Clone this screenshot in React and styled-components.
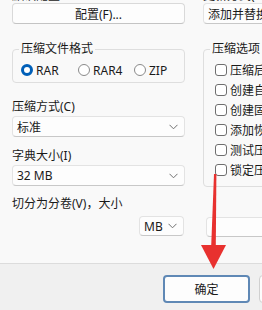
import React from 'react';
import styled, { createGlobalStyle } from 'styled-components';

const GlobalStyle = createGlobalStyle`
  html, body {
    margin: 0;
    padding: 0;
    background: #f0f0f0;
  }
  body {
    font-family: "Noto Sans", "Noto Sans CJK SC", sans-serif;
    font-size: 12px;
    color: #1a1a1a;
  }
`;

const Page = styled.div`
  position: relative;
  width: 262px;
  height: 310px;
  overflow: hidden;
`;

const Body = styled.div`
  height: 263px;
  background: #f9f9f9;
  display: flex;
  gap: 18px;
  padding-left: 12px;
  overflow: hidden;
`;

const Column = styled.div`
  display: flex;
  flex-direction: column;
  flex: 0 0 ${p => p.width}px;
  min-width: 0;
`;

const CutLabel = styled.div`
  height: 14px;
  line-height: 14px;
  margin-top: -11px;
  white-space: nowrap;
`;

const PushButton = styled.div`
  height: 21px;
  box-sizing: border-box;
  border: 1px solid #d9d9d9;
  border-bottom-color: #c4c4c4;
  border-radius: 4px;
  background: #fdfdfd;
  display: flex;
  align-items: center;
  justify-content: center;
  white-space: nowrap;
`;

const Group = styled.fieldset`
  margin: 16px 0 0;
  padding: 0 0 ${p => p.pad}px 8px;
  border: 1px solid #dedede;
  border-radius: 4px;
  min-width: 0;
`;

const Legend = styled.legend`
  padding: 0 2px;
  margin-left: -2px;
  line-height: 18px;
  white-space: nowrap;
`;

const RadioRow = styled.div`
  display: flex;
  height: 16px;
  margin-top: 4px;
  align-items: center;
`;

const RadioItem = styled.div`
  display: flex;
  align-items: center;
  gap: 3px;
  width: ${p => p.w}px;
`;

const Radio = styled.span`
  width: 12px;
  height: 12px;
  box-sizing: border-box;
  border-radius: 50%;
  border: ${p => (p.checked ? '3.5px solid #005fb8' : '1px solid #8a8a8a')};
  background: #fff;
`;

const FieldLabel = styled.div`
  margin-top: ${p => p.mt}px;
  height: 18px;
  line-height: 18px;
  white-space: nowrap;
`;

const Select = styled.div`
  height: ${p => p.h || 21}px;
  width: ${p => (p.w ? `${p.w}px` : 'auto')};
  box-sizing: border-box;
  border: 1px solid #e3e3e3;
  border-bottom-color: #c8c8c8;
  border-radius: 4px;
  background: #fdfdfd;
  display: flex;
  align-items: center;
  padding: 0 6px 0 4px;
  white-space: nowrap;
  overflow: hidden;
`;

const SelectText = styled.span`
  flex: 1;
`;

const Chevron = () => (
  <svg width="9" height="6" viewBox="0 0 9 6">
    <path d="M0.5 0.8 L4.5 4.8 L8.5 0.8" fill="none" stroke="#707070" strokeWidth="1" />
  </svg>
);

const SplitRow = styled.div`
  display: flex;
  justify-content: flex-end;
  margin-top: 3px;
  padding-right: 1px;
`;

const CheckList = styled.div`
  display: flex;
  flex-direction: column;
  margin-top: 2px;
  padding-left: 3px;
`;

const CheckRow = styled.div`
  height: 20px;
  display: flex;
  align-items: center;
  gap: 3px;
  white-space: nowrap;
`;

const Checkbox = styled.span`
  flex: 0 0 12px;
  height: 12px;
  box-sizing: border-box;
  border: 1px solid #6e6e6e;
  border-radius: 3px;
  background: #fff;
`;

const TextBox = styled.div`
  height: 20px;
  margin: 30px 0 0 3px;
  box-sizing: border-box;
  border: 1px solid #e3e3e3;
  border-bottom-color: #c8c8c8;
  border-radius: 4px;
  background: #fdfdfd;
`;

const Footer = styled.div`
  height: 46px;
  border-top: 1px solid #dcdcdc;
  background: #f0f0f0;
  display: flex;
  gap: 9px;
  padding: 11px 0 0 163px;
`;

const DialogButton = styled.div`
  flex: 0 0 ${p => p.w}px;
  height: 28px;
  box-sizing: border-box;
  border: ${p => (p.primary ? '2px solid #5f88b5' : '1px solid #d0d0d0')};
  border-radius: 4px;
  background: #fdfdfd;
  display: flex;
  align-items: center;
  justify-content: center;
  font-size: 12px;
`;

const ArrowLayer = styled.svg`
  position: absolute;
  left: 0;
  top: 0;
  pointer-events: none;
`;

const checks = [
  '压缩后删除原来的文件',
  '创建自解压格式压缩文件',
  '创建固实压缩文件',
  '添加恢复记录',
  '测试压缩的文件',
  '锁定压缩文件',
];

export default function App() {
  return (
    <Page>
      <GlobalStyle />
      <Body>
        <Column width={173}>
          <CutLabel>默认配置</CutLabel>
          <PushButton>配置(F)...</PushButton>
          <Group pad={4}>
            <Legend>压缩文件格式</Legend>
            <RadioRow>
              <RadioItem w={57}><Radio checked />RAR</RadioItem>
              <RadioItem w={56}><Radio />RAR4</RadioItem>
              <RadioItem w={40}><Radio />ZIP</RadioItem>
            </RadioRow>
          </Group>
          <FieldLabel mt={15}>压缩方式(C)</FieldLabel>
          <Select>
            <SelectText>标准</SelectText>
            <Chevron />
          </Select>
          <FieldLabel mt={10}>字典大小(I)</FieldLabel>
          <Select>
            <SelectText>32 MB</SelectText>
            <Chevron />
          </Select>
          <FieldLabel mt={9}>切分为分卷(V)，大小</FieldLabel>
          <SplitRow>
            <Select w={45} h={20}>
              <SelectText>MB</SelectText>
              <Chevron />
            </Select>
          </SplitRow>
        </Column>
        <Column width={170}>
          <CutLabel>更新方式(U)</CutLabel>
          <Select>
            <SelectText>添加并替换文件</SelectText>
          </Select>
          <Group pad={6}>
            <Legend>压缩选项</Legend>
            <CheckList>
              {checks.map(c => (
                <CheckRow key={c}>
                  <Checkbox />
                  {c}
                </CheckRow>
              ))}
            </CheckList>
          </Group>
          <TextBox />
        </Column>
      </Body>
      <Footer>
        <DialogButton primary w={87}>确定</DialogButton>
        <DialogButton w={87}>取消</DialogButton>
      </Footer>
      <ArrowLayer width="262" height="310" viewBox="0 0 262 310">
        <path d="M214 174 L216.4 174 L215.8 246 L211.2 246 Z" fill="#e8312f" />
        <path d="M201 245 L226 245 L213.5 269 Z" fill="#e8312f" />
      </ArrowLayer>
    </Page>
  );
}
